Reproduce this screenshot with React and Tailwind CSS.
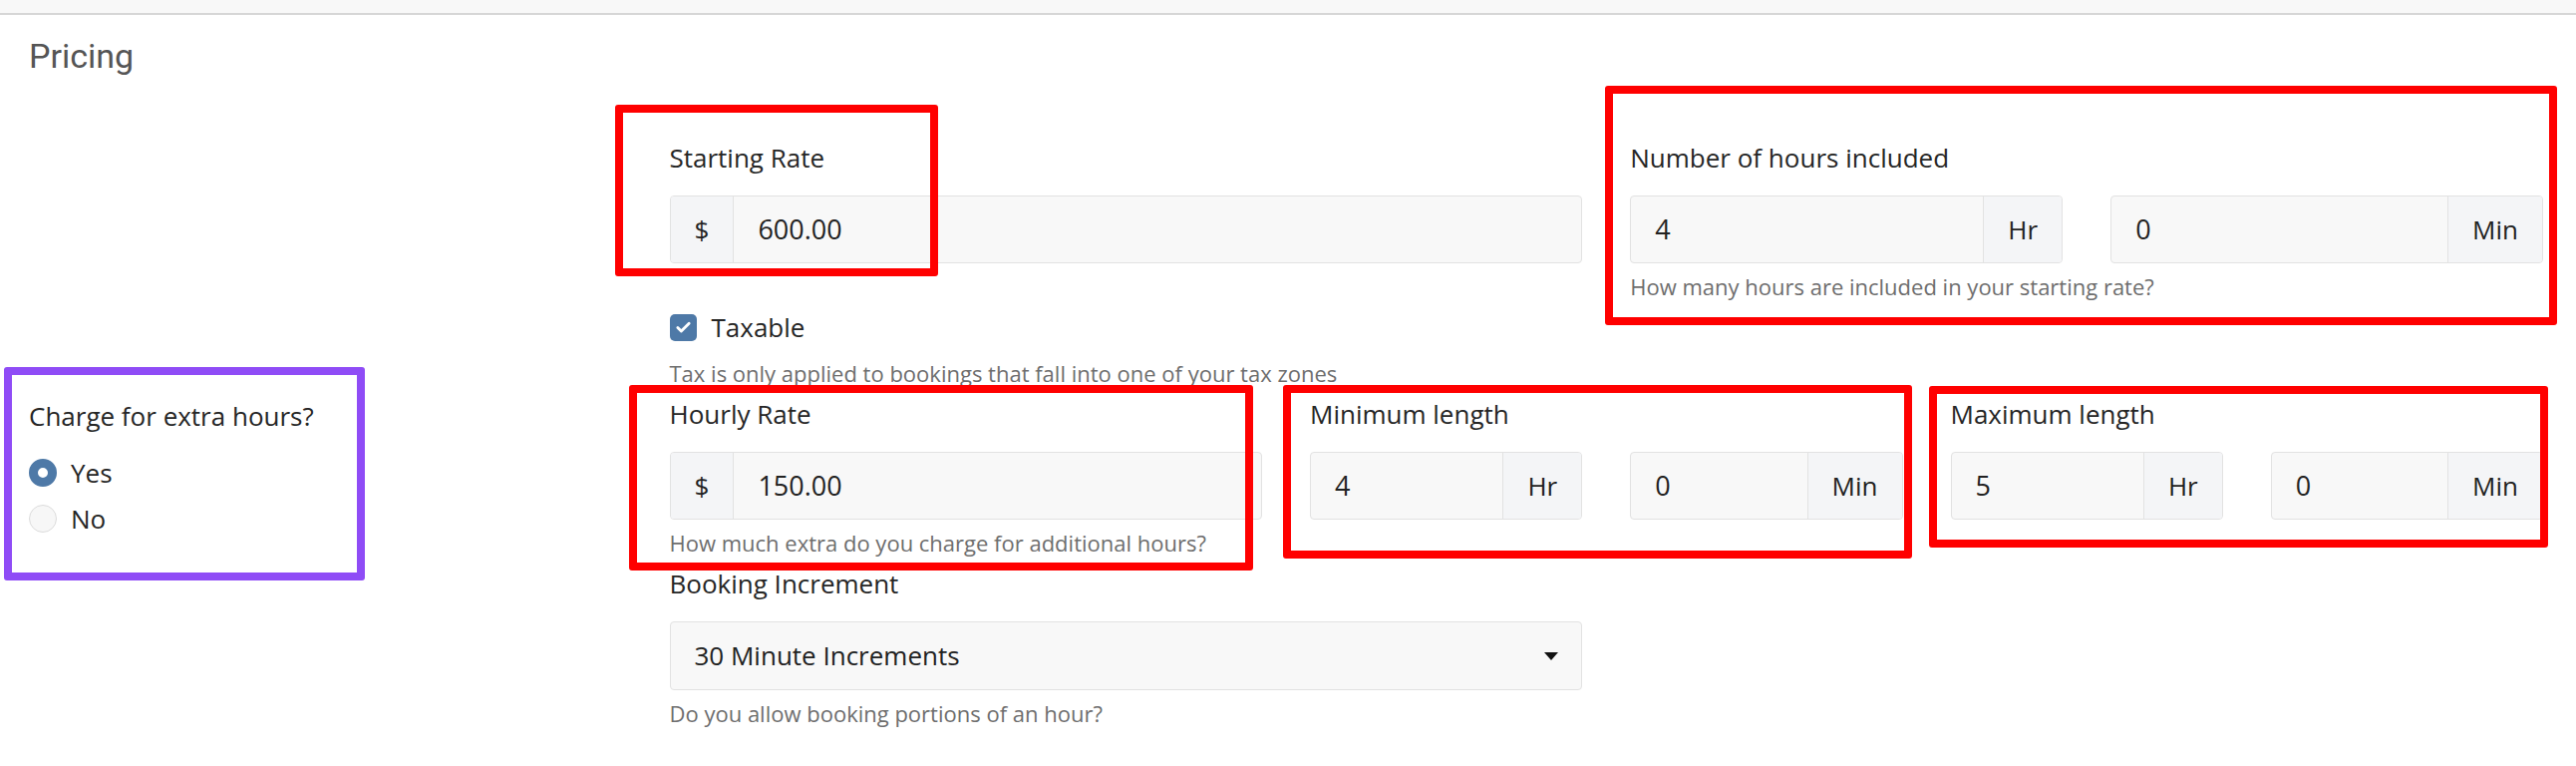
import { Check } from "lucide-react";

const label = "block text-[26px] leading-[38px] text-[#262626]";
const help = "mt-[7px] text-[22px] leading-[32px] text-[#6e6e6e]";

function InputGroup({ prefix, suffix, value }) {
  return (
    <div className="flex h-[68px] overflow-hidden rounded-[4px] border border-[#e2e2e2] bg-[#f8f8f8]">
      {prefix && (
        <span className="flex items-center border-r border-[#e2e2e2] bg-[#f4f5f7] px-6 text-[26px] text-[#222]">
          {prefix}
        </span>
      )}
      <input
        readOnly
        value={value}
        className="min-w-0 flex-1 bg-transparent px-6 text-[27px] text-[#222] outline-none"
      />
      {suffix && (
        <span className="flex items-center border-l border-[#e2e2e2] bg-[#f4f5f7] px-6 text-[26px] text-[#222]">
          {suffix}
        </span>
      )}
    </div>
  );
}

function Duration({ title, hours, minutes, hint }) {
  return (
    <div>
      <label className={label}>{title}</label>
      <div className="mt-[19px] grid grid-cols-2 gap-x-12">
        <InputGroup value={hours} suffix="Hr" />
        <InputGroup value={minutes} suffix="Min" />
      </div>
      {hint && <p className={help}>{hint}</p>}
    </div>
  );
}

function Radio({ checked, children }) {
  return (
    <div className="flex items-center gap-[14px] text-[26px] leading-[38px] text-[#262626]">
      {checked ? (
        <span className="size-[28px] rounded-full border-[9px] border-[#4e79a7] bg-white" />
      ) : (
        <span className="size-[28px] rounded-full border border-[#dcdcdc] bg-[#f7f7f7]" />
      )}
      {children}
    </div>
  );
}

export default function App() {
  return (
    <div className="relative min-h-screen w-full bg-white font-['Open_Sans',sans-serif]">
      <div className="h-[15px] border-b-2 border-[#d6d6d6] bg-[#f8f8f8]" />

      <div className="pl-[5px] pr-[9px]">
        <h2 className="mt-[21px] px-6 font-['Roboto',sans-serif] text-[34px] leading-[40px] text-[#555]">
          Pricing
        </h2>

        {/* base rate + included hours */}
        <div className="ml-[25%] mt-[63px] px-6">
          <div className="grid grid-cols-2 gap-x-12">
            <div>
              <label className={label}>Starting Rate</label>
              <div className="mt-[19px]">
                <InputGroup prefix="$" value="600.00" />
              </div>
            </div>
            <Duration
              title="Number of hours included"
              hours="4"
              minutes="0"
              hint="How many hours are included in your starting rate?"
            />
          </div>

          <div className="mt-[6px] flex items-center gap-[15px] text-[26px] leading-[38px] text-[#262626]">
            <span className="flex size-[27px] items-center justify-center rounded-[5px] bg-[#4e79a7]">
              <Check className="size-[17px] text-white" strokeWidth={4} />
            </span>
            Taxable
          </div>
          <p className="mt-[11px] text-[22px] leading-[32px] text-[#6e6e6e]">
            Tax is only applied to bookings that fall into one of your tax zones
          </p>
        </div>

        {/* extra hours */}
        <div className="mt-[6px] flex">
          <div className="w-1/4 px-6">
            <div className="mt-[2px] text-[26px] leading-[38px] text-[#262626]">Charge for extra hours?</div>
            <div className="mt-[19px]">
              <Radio checked>Yes</Radio>
            </div>
            <div className="mt-[8px]">
              <Radio>No</Radio>
            </div>
          </div>

          <div className="w-3/4 px-6">
            <div className="grid grid-cols-3 gap-x-12">
              <div>
                <label className={label}>Hourly Rate</label>
                <div className="mt-[19px]">
                  <InputGroup prefix="$" value="150.00" />
                </div>
                <p className={help}>How much extra do you charge for additional hours?</p>
              </div>
              <Duration title="Minimum length" hours="4" minutes="0" />
              <Duration title="Maximum length" hours="5" minutes="0" />
            </div>

            <div className="mt-[6px] w-[calc(50%-24px)]">
              <label className={label}>Booking Increment</label>
              <div className="mt-[19px] flex h-[69px] items-center justify-between rounded-[4px] border border-[#e2e2e2] bg-[#f8f8f8] pl-[24px] pr-[22px] text-[26px] text-[#222]">
                <span>30 Minute Increments</span>
                <svg width="16" height="10" viewBox="0 0 16 10">
                  <path d="M1 1h14L8 9z" fill="#111" />
                </svg>
              </div>
              <p className={help}>Do you allow booking portions of an hour?</p>
            </div>
          </div>
        </div>
      </div>

      {/* highlight frames */}
      <div className="pointer-events-none absolute left-[617px] top-[105px] h-[172px] w-[324px] rounded-[3px] border-[8px] border-[#ff0000]" />
      <div className="pointer-events-none absolute left-[1610px] top-[86px] h-[240px] w-[955px] rounded-[3px] border-[8px] border-[#ff0000]" />
      <div className="pointer-events-none absolute left-[631px] top-[386px] h-[186px] w-[626px] rounded-[3px] border-[8px] border-[#ff0000]" />
      <div className="pointer-events-none absolute left-[1287px] top-[386px] h-[174px] w-[631px] rounded-[3px] border-[8px] border-[#ff0000]" />
      <div className="pointer-events-none absolute left-[1935px] top-[387px] h-[162px] w-[621px] rounded-[3px] border-[8px] border-[#ff0000]" />
      <div className="pointer-events-none absolute left-[4px] top-[368px] h-[214px] w-[362px] rounded-[3px] border-[8px] border-[#8f4cf6]" />
    </div>
  );
}
